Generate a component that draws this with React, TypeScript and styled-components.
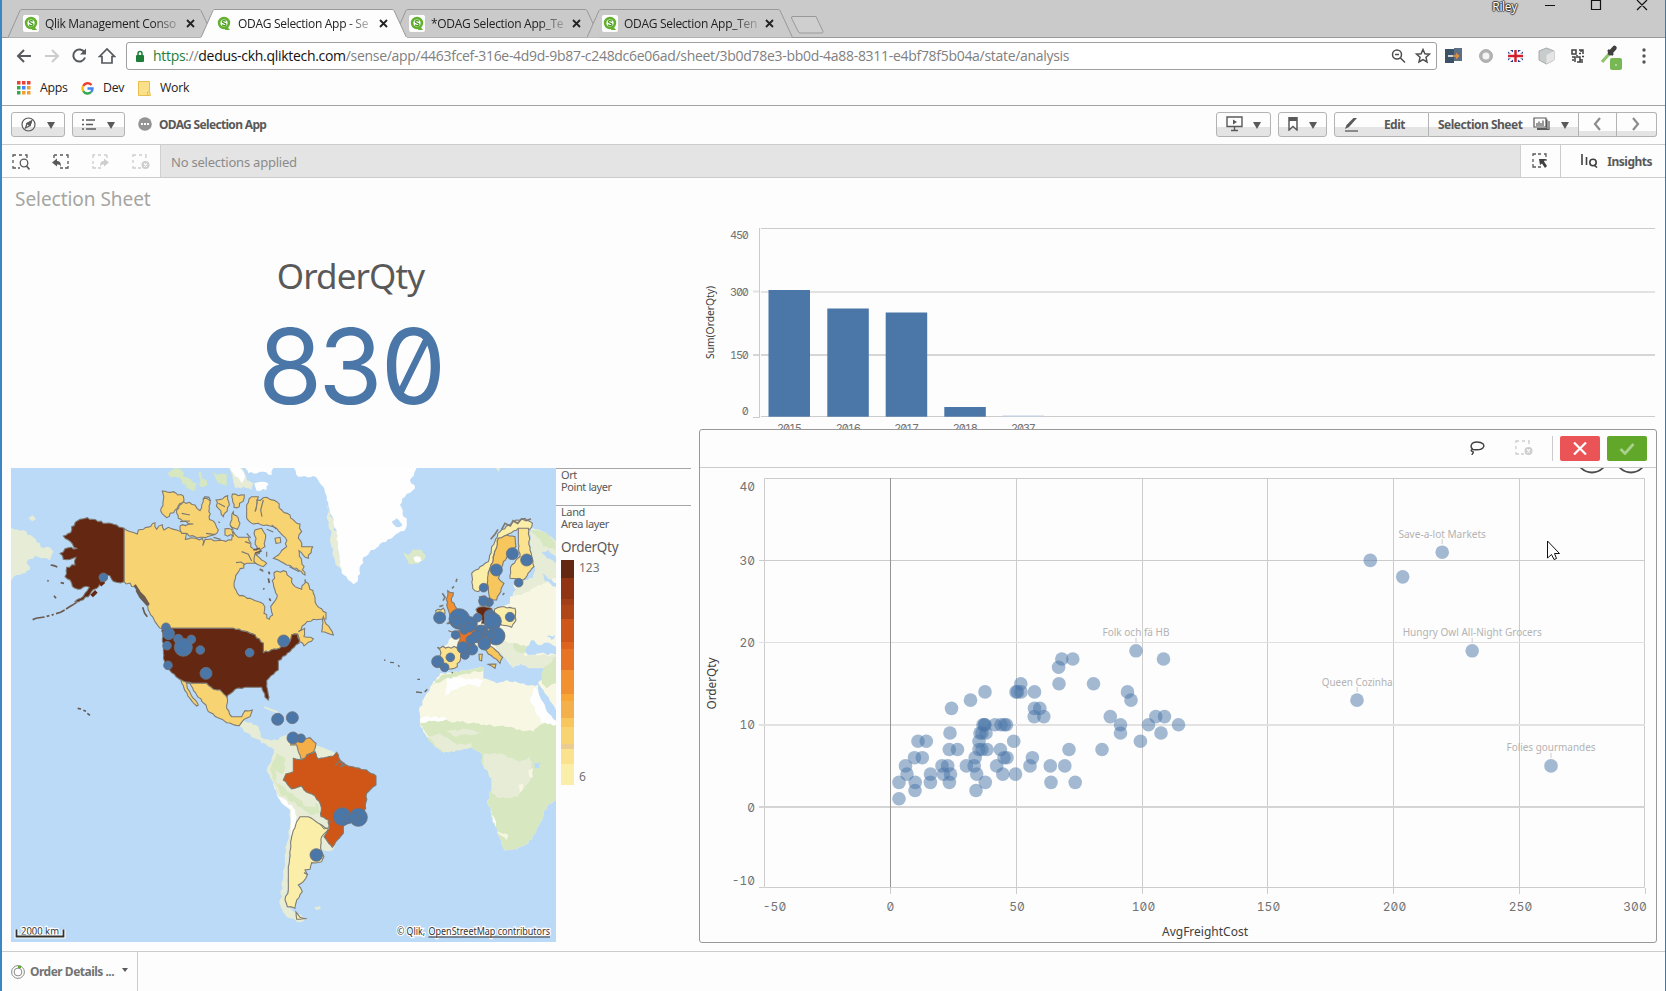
import React from "react";
import styled, { createGlobalStyle } from "styled-components";

const Global = createGlobalStyle`
  * { box-sizing: border-box; }
  html, body { margin: 0; padding: 0; }
  body { width: 1666px; height: 991px; overflow: hidden; background: #fdfdfd; font-family: "Noto Sans", sans-serif; color: #595959; }
  svg { display: block; flex: none; }
  svg text { font-family: "Noto Sans", sans-serif; }
`;

const Window = styled.div`
  width: 1666px;
  height: 991px;
  display: flex;
  flex-direction: column;
  border-left: 2px solid #3b86c4;
  border-right: 1px solid #1e7fd0;
  background: #fdfdfd;
  overflow: hidden;
`;

/* ---------- browser chrome ---------- */

const TabStrip = styled.div`
  height: 38px;
  flex: none;
  display: flex;
  justify-content: space-between;
  background: #cacaca;
  border-bottom: 1px solid #999;
`;
const Tabs = styled.div`
  display: flex;
  padding: 9px 0 0 6px;
  height: 38px;
`;
const TabBox = styled.div<{ $active?: boolean }>`
  width: 206px;
  height: 29px;
  margin-right: -13px;
  display: grid;
  grid-template-columns: 206px;
  z-index: ${(p) => (p.$active ? 2 : 1)};
  > * { grid-area: 1 / 1; }
`;
const TabContent = styled.div`
  display: flex;
  align-items: center;
  padding: 0 19px 0 15px;
  gap: 6px;
`;
const Favicon = styled.span<{ $plate: boolean }>`
  width: 16px;
  height: 17px;
  flex: none;
  display: grid;
  place-items: center;
  border-radius: 2px;
  background: ${(p) => (p.$plate ? "#fdfdfd" : "transparent")};
`;
const TabTitle = styled.span`
  flex: 1;
  min-width: 0;
  font: 12px/18px "Open Sans", sans-serif;
  letter-spacing: -0.3px;
  color: #222;
  white-space: nowrap;
  mask-image: linear-gradient(to right, #000 80%, rgba(0, 0, 0, 0.25) 98%);
`;
const WindowButtons = styled.div`
  display: flex;
  align-items: flex-start;
  padding-right: 13px;
`;
const UserName = styled.span`
  font: 12px/14px "Open Sans", sans-serif;
  letter-spacing: -0.3px;
  color: #fff;
  text-shadow: 1px 0 1px #333, -1px 0 1px #333, 0 1px 1px #333, 0 -1px 1px #333;
  margin-right: 27px;
`;
const AddressRow = styled.div`
  height: 35px;
  flex: none;
  display: flex;
  align-items: center;
  padding: 1px 13px 0 13px;
`;
const NavIcons = styled.div`
  display: flex;
  gap: 11px;
  width: 111px;
`;
const UrlBox = styled.div`
  width: 1311px;
  height: 28px;
  border: 1px solid #a0a0a0;
  border-radius: 3px;
  display: flex;
  align-items: center;
  padding: 0 5px 0 8px;
  background: #fff;
`;
const Url = styled.span`
  flex: 1;
  margin-left: 8px;
  font: 14px/20px "Open Sans", sans-serif;
  letter-spacing: -0.3px;
  white-space: nowrap;
  color: #808080;
  b { font-weight: 400; color: #111; }
  i { font-style: normal; color: #1d7f3a; }
`;
const Extensions = styled.div`
  flex: 1;
  display: flex;
  align-items: center;
  justify-content: space-between;
  padding-left: 8px;
`;
const Bookmarks = styled.div`
  height: 33px;
  flex: none;
  display: flex;
  align-items: center;
  padding: 0 0 2px 15px;
  border-bottom: 1px solid #a4a4a4;
  font: 12.3px/18px "Open Sans", sans-serif;
  letter-spacing: -0.25px;
  color: #222;
`;
const BookmarkLabel = styled.span<{ $w: number }>`
  width: ${(p) => p.$w}px;
  margin-left: 9px;
`;

/* ---------- application header ---------- */

const AppBar = styled.div`
  height: 39px;
  flex: none;
  display: flex;
  align-items: center;
  justify-content: space-between;
  padding: 0 8px 2px 9px;
  border-bottom: 1px solid #ccc;
`;
const Cluster = styled.div<{ $gap?: number }>`
  display: flex;
  align-items: center;
  gap: ${(p) => p.$gap ?? 0}px;
`;
const Button = styled.div<{ $w: number; $split?: number; $l?: boolean; $r?: boolean; $pr?: number }>`
  width: ${(p) => p.$w}px;
  height: 25px;
  display: flex;
  align-items: center;
  justify-content: space-between;
  padding: 0 ${(p) => p.$pr ?? 9}px 0 9px;
  border: 1px solid #b3b3b3;
  border-left-width: ${(p) => (p.$l ? 0 : 1)}px;
  border-radius: ${(p) => (p.$l ? "0" : "3px")} ${(p) => (p.$r ? "0 0" : "3px 3px")} ${(p) => (p.$l ? "0" : "3px")};
  background: linear-gradient(#fdfdfd ${(p) => p.$split ?? 14}px, #e4e4e4 ${(p) => p.$split ?? 14}px);
  font-size: 12px;
  font-weight: 700;
  letter-spacing: -0.5px;
`;
const AppName = styled.span`
  font-size: 12px;
  font-weight: 700;
  letter-spacing: -0.67px;
  margin-left: 7px;
`;
const Caret = styled.span`
  width: 0;
  border: 4.5px solid transparent;
  border-top: 7px solid #595959;
  border-bottom: 0;
  margin-top: 2px;
`;
const SelectionBar = styled.div`
  height: 33px;
  flex: none;
  display: flex;
  border-bottom: 1px solid #ccc;
`;
const SelectionTools = styled.div`
  width: 158px;
  display: flex;
  align-items: center;
  padding: 2px 0 0 10px;
  gap: 22px;
`;
const SelectionText = styled.div`
  flex: 1;
  border: 1px solid #d0d0d0;
  border-width: 0 1px;
  background: #e4e4e4;
  padding-left: 10px;
  font-size: 13px;
  line-height: 34px;
  letter-spacing: -0.22px;
  color: #8b8b8b;
`;
const SmartSearch = styled.div`
  width: 40px;
  display: grid;
  place-items: center;
  padding: 1px 0 0 1px;
  border-right: 1px solid #ccc;
`;
const Insights = styled.div`
  width: 104px;
  display: flex;
  align-items: center;
  justify-content: space-between;
  padding: 0 13px 0 20px;
  font-size: 12px;
  font-weight: 700;
  letter-spacing: -0.5px;
`;

/* ---------- sheet ---------- */

const Sheet = styled.main`
  flex: 1;
  min-height: 0;
  display: flex;
`;
const LeftColumn = styled.section`
  width: 689px;
  padding-left: 9px;
  display: flex;
  flex-direction: column;
`;
const SheetTitle = styled.h1`
  margin: 8px 0 0 4px;
  font-size: 19px;
  line-height: 26px;
  font-weight: 400;
  letter-spacing: -0.04px;
  color: #a5a5a2;
`;
const Kpi = styled.div`
  height: 256px;
  display: flex;
  flex-direction: column;
  align-items: center;
  padding-top: 36px;
`;
const KpiLabel = styled.div`
  font-size: 35px;
  line-height: 56px;
  letter-spacing: -0.9px;
  margin-right: 1px;
`;
const KpiValue = styled.div`
  font: 400 104px/100px Inter, sans-serif;
  font-feature-settings: "zero", "tnum";
  letter-spacing: -5.8px;
  color: #4a76a8;
  margin: 12px 4px 0 0;
`;
const MapRow = styled.div`
  display: flex;
`;
const Legend = styled.div`
  width: 135px;
  display: flex;
  flex-direction: column;
`;
const LayerInfo = styled.div<{ $h: number }>`
  height: ${(p) => p.$h}px;
  border-top: 1px solid #a6a6a6;
  padding: 0 0 0 5px;
  font-size: 11px;
  line-height: 12px;
  letter-spacing: -0.4px;
`;
const LegendTitle = styled.div`
  padding: 6px 0 0 5px;
  font-size: 13.5px;
  line-height: 18px;
  height: 28px;
  letter-spacing: -0.3px;
`;
const Scale = styled.div`
  display: flex;
  gap: 5px;
  padding-left: 5px;
  height: 225px;
`;
const Ramp = styled.div`
  width: 13px;
  display: flex;
  flex-direction: column;
`;
const Step = styled.div<{ $h: number; $c: string }>`
  flex: ${(p) => p.$h};
  background: ${(p) => p.$c};
`;
const ScaleLabels = styled.div`
  display: flex;
  flex-direction: column;
  justify-content: space-between;
  font-size: 12px;
  line-height: 16px;
  color: #737373;
`;
const RightColumn = styled.section`
  flex: 1;
  display: flex;
  flex-direction: column;
  padding-left: 8px;
`;
const BarArea = styled.div`
  height: 251px;
  overflow: hidden;
`;
const ScatterPanel = styled.div`
  width: 958px;
  height: 514px;
  border: 1px solid #999;
  border-radius: 3px;
`;
const PanelBar = styled.div`
  height: 38px;
  display: flex;
  align-items: center;
  justify-content: flex-end;
  padding-right: 9px;
  border-bottom: 1px solid #ccc;
`;
const ToolGap = styled.span`
  width: 30px;
`;
const Divider = styled.span`
  width: 1px;
  height: 25px;
  background: #ccc;
  margin: 0 7px 0 19px;
`;
const Confirm = styled.span<{ $c: string }>`
  width: 40px;
  height: 25px;
  display: grid;
  place-items: center;
  border-radius: 2px;
  background: ${(p) => p.$c};
  & + & { margin-left: 7px; }
`;
const Footer = styled.footer`
  height: 40px;
  flex: none;
  border-top: 1px solid #ccc;
`;
const NavPoint = styled.div`
  width: 136px;
  height: 39px;
  border-right: 1px solid #ccc;
  display: flex;
  align-items: center;
  padding: 0 0 0 9px;
  font-size: 12px;
  font-weight: 700;
  letter-spacing: -0.5px;
  color: #737373;
`;
const FooterLabel = styled.span`
  width: 92px;
  flex: none;
  margin-left: 5px;
  white-space: nowrap;
`;
const SmallCaret = styled(Caret)`
  border-width: 4px 3.5px 0;
  margin-top: -4px;
`;

/* ---------- icons ---------- */

const QlikIcon = () => (
  <svg width="14" height="15" viewBox="0 0 14 15">
    <circle cx="7" cy="7" r="4.9" fill="#fff" stroke="#62b02e" strokeWidth="2.6" />
    <path d="M9 9.5l4 4.6H8z" fill="#62b02e" />
    <path d="M9 5.2C8 4.3 5.3 4.3 5.3 5.8S9 6.8 9 8.4 6 9.800 5 8.800" fill="none" stroke="#4c9a25" strokeWidth="1.3" />
  </svg>
);

const Tab = ({ title, active }: { title: string; active?: boolean }) => (
  <TabBox $active={active}>
    <svg width="206" height="29" viewBox="0 0 206 29">
      <path d="M0 28.500 L12 1.500 Q12.500 .5 14 .5 H191 Q192.500 .5 193 1.500 L205.500 28.500" fill={active ? "#fdfdfd" : "#cacaca"} stroke="#999" />
      {active && <path d="M0 28.500H206" stroke="#fdfdfd" />}
    </svg>
    <TabContent>
      <Favicon $plate={!active}><QlikIcon /></Favicon>
      <TabTitle>{title}</TabTitle>
      <svg width="9" height="9" viewBox="0 0 9 9"><path d="M1 1l7 7M8 1l-7 7" stroke="#222" strokeWidth="1.8" /></svg>
    </TabContent>
  </TabBox>
);

type Kind = "search" | "back" | "forward" | "clear" | "smart";
const DashedIcon = ({ kind, faint }: { kind: Kind; faint?: boolean }) => {
  const c = faint ? "#cdcdcd" : "#595959";
  const frames: Record<Kind, string> = {
    search: "M1 3V1H4M7 1H10M13 1H15V4M1 6V9M1 12V14H4M6 14H8",
    back: "M2 1H5M8 1H11M14 1H16V4M16 7V10M16 12V14H13M11 14H8M2 1V4",
    forward: "M15 1H12M9 1H6M3 1H1V4M1 7V10M1 12V14H4M6 14H9M15 1V4",
    clear: "M1 3V1H4M7 1H10M13 1H14V4M1 6V9M1 12V14H4M6 14H9",
    smart: "M1 3V1H4M6 1H9M12 1H14V4M1 6V9M1 11V14H4M6 14H9M14 6V8",
  };
  return (
    <svg width="18" height="17" viewBox="0 0 18 17" fill="none" stroke={c} strokeWidth="1.3">
      <path d={frames[kind]} />
      {kind === "search" && <><circle cx="12" cy="9" r="3.800" /><path d="M14.500 12l3 3.500" strokeWidth="1.8" /></>}
      {kind === "back" && <path d="M0 8.500L5 4.500V7C8 7 9 9 9 13 8 10.500 7 10.500 5 10.500V12.500Z" fill={c} stroke="none" />}
      {kind === "forward" && <path d="M17 8.500L12 4.500V7C9 7 8 9 8 13 9 10.500 10 10.500 12 10.500V12.500Z" fill={c} stroke="none" />}
      {kind === "clear" && <><circle cx="13.500" cy="11" r="4" fill={c} stroke="none" /><path d="M12 9.500l3 3M15 9.500l-3 3" stroke="#fff" strokeWidth="1.300" /></>}
      {kind === "smart" && <path d="M7 6H14L12 8.500 15 13 13 15 10 10.500 8 12Z" fill="#404040" stroke="none" />}
    </svg>
  );
};

/* ---------- map ---------- */

const parse = (s: string) => s.trim().split(/\s+/).map((p) => p.split(",").map(Number));

// Breaks long coastline segments with a small repeatable displacement; axis-aligned borders stay straight.
const coast = (source: string, amp = 4) => {
  const points = parse(source);
  const out: string[] = [];
  points.forEach((a, i) => {
    const b = points[(i + 1) % points.length];
    out.push(a.join(","));
    const dx = b[0] - a[0];
    const dy = b[1] - a[1];
    const len = Math.hypot(dx, dy);
    if (dx === 0 || dy === 0 || len < 12) return;
    const n = Math.floor(len / 8);
    const side = dx > 0 ? 1 : -1;
    for (let k = 1; k < n; k++) {
      const x = a[0] + (dx * k) / n;
      const y = a[1] + (dy * k) / n;
      const r = Math.sin(Math.round(x) * 12.9898 + Math.round(y) * 78.233) * 43758.5453;
      const j = (r - Math.floor(r) - 0.5) * 2 * amp * side;
      out.push(`${(x - (dy / len) * j).toFixed(1)},${(y + (dx / len) * j).toFixed(1)}`);
    }
  });
  return `M${out.join("L")}Z`;
};

type Shape = [fill: string, points: string, amp?: number];

const northBase: Shape[] = [
  ["#e6ecd6", "33,233 70,240 100,262 130,295 140,290 160,305 150,332 125,325 105,318 80,335 90,360 50,375 33,392"],
  ["#e6ecd6", "85,205 97,196 108,206 97,214"],
  ["#d7e7c0", "503,70 525,54 545,60 550,78 590,100 585,122 560,115 540,85 510,82"],
  ["#d7e7c0", "598,62 605,85 620,90 622,105 600,110"],
  ["#d7e7c0", "635,65 655,75 680,72 680,108 650,92"],
  ["#e6ecd6", "700,95 690,60 725,54 740,90 760,100 755,120 730,110 705,115"],
  ["#fefefe", "688,54 720,54 735,80 725,100 700,70"],
  ["#fefefe", "735,54 820,54 815,75 780,65 745,70"],
  ["#fefefe", "763,100 785,95 806,102 800,120 770,122"],
  ["#e6ecd6", "730,810 775,830 780,862 815,872 850,862 870,850 870,900 830,898 800,885 765,865 735,838 718,828"],
  ["#e6ecd6", "790,768 835,785 830,788 795,774", 1],
];

const northAreas: Shape[] = [
  ["#f8d372", "372,235 398,247 412,252 415,240 430,238 465,218 470,238 487,224 492,240 505,232 530,240 560,248 556,268 607,265 608,287 615,268 650,272 695,270 700,245 715,262 745,262 752,290 770,300 765,240 785,235 797,255 795,290 765,320 765,340 740,340 712,370 702,402 718,437 750,445 790,462 792,490 808,508 818,495 812,470 830,445 825,420 820,400 822,368 850,362 868,380 885,410 905,418 915,388 940,430 950,465 978,488 978,507 940,508 915,522 895,545 914,535 912,560 940,567 912,588 900,575 893,553 875,555 870,575 830,598 790,608 790,580 765,555 700,535 480,535 465,515 445,480 440,455 405,410 372,395"],
  ["#632712", "487,535 700,535 765,555 790,580 790,608 830,598 870,575 875,555 893,553 897,580 870,605 835,632 835,660 800,692 805,750 795,742 785,712 735,712 705,718 680,744 660,720 640,718 620,700 575,700 543,690 515,668 495,640 490,600", 3],
  ["#632712", "372,235 350,225 310,220 262,203 240,208 215,230 212,248 190,258 205,270 230,295 205,293 180,310 190,328 228,322 225,345 200,352 195,380 215,400 225,415 268,412 255,430 225,455 265,440 300,400 320,375 350,397 372,395"],
  ["#f8d372", "543,690 575,700 620,700 640,718 660,720 682,745 680,775 695,800 725,800 735,782 757,780 750,800 732,808 718,827 680,818 625,785 618,765 590,735 570,700 560,700 562,715 595,765 590,768 570,745 555,722", 2],
  ["#f8d372", "487,123 520,125 550,138 552,150 525,180 500,203 482,182 490,150"],
  ["#f8d372", "530,180 550,155 585,165 600,182 610,145 630,152 627,200 655,240 640,255 600,262 545,250 540,228 580,222 535,205"],
  ["#f8d372", "648,150 683,137 688,165 670,200 655,175"],
  ["#f8d372", "697,132 733,135 718,170 702,172"],
  ["#f8d372", "700,185 720,220 712,238 690,225"],
  ["#f8d372", "675,236 695,238 700,258 675,255"],
  ["#f8d372", "740,165 755,140 775,140 765,185 770,150 800,142 830,155 845,180 870,195 885,215 900,222 905,245 895,265 905,290 938,290 925,325 897,302 915,375 890,355 860,345 835,330 820,325 835,315 860,290 855,262 830,235 800,225 775,220 760,222 740,205"],
  ["#f8d372", "765,312 800,340 790,350 770,342 762,335", 2],
  ["#f8d372", "970,500 965,545 1000,555 990,535 978,522", 2],
  ["#f8d372", "825,265 840,262 842,278 828,280", 2],
];

const atlanticBase: Shape[] = [
  ["#e6ecd6", "140,165 150,200 165,205 160,240 180,250 175,300 185,370 165,330 152,280 155,245 145,225"],
  ["#fefefe", "42,54 55,80 100,78 130,110 140,150 158,200 170,250 175,300 185,370 220,403 232,395 250,322 300,282 340,260 378,235 380,215 360,165 375,140 405,115 390,90 410,54"],
  ["#badaf7", "335,215 350,205 368,225 350,232"],
  ["#dbe9c8", "370,305 385,315 400,298 425,300 438,318 415,342 385,340 375,320"],
  ["#fefefe", "400,322 420,320 425,332 405,335"],
  ["#e6ecd6", "648,54 660,54 655,66"],
  ["#f7f6e2", "752,235 800,250 828,275 828,615 790,628 740,622 700,655 680,630 655,600 620,585 590,590 560,580 520,610 480,600 520,560 560,530 590,485 640,478 690,460 690,440 715,420 700,405 760,385 765,350 750,300"],
  ["#e6ecd6", "752,235 790,245 828,275 828,385 790,400 730,430 695,440 710,418 700,405 760,385 765,350 750,300"],
  ["#d7e7c0", "755,240 800,250 826,280 826,300 790,290"],
  ["#f7f6e2", "735,470 750,430 765,460 745,490"],
  ["#e6ecd6", "640,560 680,575 730,590 735,620 700,655 675,625 650,600"],
  ["#d7e7c0", "700,580 740,590 732,610 705,600"],
  ["#badaf7", "735,605 755,570 775,585 810,580 828,590 828,614 780,610 745,615"],
  ["#badaf7", "785,305 805,300 828,320 828,340 800,325"],
  ["#badaf7", "785,370 800,380 828,400 828,410 795,392"],
  ["#badaf7", "800,560 825,555 815,570"],
  ["#e6ecd6", "718,628 750,615 828,614 828,655 790,655 745,655 725,645"],
  ["#d7e7c0", "790,655 828,620 828,700 800,715 785,700"],
];

const southBase: Shape[] = [
  ["#f8f7e3", "720,-50 760,-55 850,-68 850,-35 890,-20 920,-30 1005,-12 1025,-30 1068,-30 1068,330 1030,362 1020,400 985,460 950,478 915,482 885,405 862,340 875,300 875,265 850,228 845,190 815,172 770,180 730,187 690,155 660,100 657,60 680,10"],
  ["#fefefe", "740,-40 850,-30 840,-10 800,-15 760,0 730,20 740,-10"],
  ["#fefefe", "1000,-10 1040,30 1068,80 1068,110 1030,100 1005,60 990,30"],
  ["#fefefe", "660,85 700,80 740,85 740,96 660,98"],
  ["#d7e7c0", "660,98 730,92 780,95 900,108 1000,125 1035,98 1068,105 1068,330 1030,362 1020,400 985,460 950,478 915,482 885,405 862,340 875,300 875,265 850,228 845,190 815,172 770,180 730,187 690,155"],
  ["#e6ecd6", "850,192 900,190 960,215 990,200 1000,260 950,320 900,325 875,310 875,265 850,228"],
  ["#e6ecd6", "680,140 720,130 770,165 815,160 815,172 770,180 730,187"],
  ["#e6ecd6", "740,125 800,118 850,130 810,135 760,138"],
  ["#d7e7c0", "720,-40 760,-55 850,-68 850,-58 760,-40 700,-15"],
  ["#badaf7", "1012,-20 1030,0 1068,60 1068,92 1045,70 1020,20", 2],
  ["#badaf7", "1003,218 1022,215 1018,235 1005,235"],
  ["#f7f6e2", "955,285 970,280 968,300 958,310"],
  ["#f7f6e2", "985,240 1000,235 998,262 988,262"],
  ["#fefefe", "868,360 875,365 888,405 885,410"],
  ["#f7f6e2", "890,425 925,435 920,450"],
  ["#e6ecd6", "240,142 262,135 300,145 345,165 375,175 410,190 430,300 420,440 395,482 362,478 365,420 300,400 275,440 265,520 262,620 265,650 290,670 320,686 292,697 260,680 240,645 250,560 258,480 272,400 270,360 235,320 215,270 200,240 215,205 228,165"],
  ["#d7e7c0", "228,190 255,205 250,250 225,240 230,280 290,320 350,340 360,370 330,375 290,345 240,310 210,240"],
  ["#e6ecd6", "262,290 310,300 345,325 350,350 320,350 285,320"],
  ["#fefefe", "215,270 235,320 275,345 290,380 285,410 272,440 272,360 240,330"],
  ["#e6ecd6", "343,652 360,648 362,656 348,660", 2],
  ["#e6ecd6", "115,108 178,112 182,140 205,155 240,146 232,156 200,166 165,145 140,128"],
  ["#e6ecd6", "190,48 235,65 232,69 195,55", 1],
];

const southAreas: Shape[] = [
  ["#f4af48", "260,145 270,140 290,150 330,143 348,160 340,185 320,195 320,205 303,207 295,185 290,165 262,165", 2],
  ["#cf5617", "280,205 305,210 322,195 345,185 355,207 400,198 410,187 420,210 445,228 500,240 528,258 528,285 500,310 497,355 470,385 432,405 430,430 397,472 372,440 388,415 385,390 363,380 362,345 345,318 312,300 305,288 275,297 250,270 258,252 280,245", 2],
  ["#fbeea9", "300,380 325,380 365,405 385,418 365,440 362,475 372,500 365,515 335,518 330,538 315,540 322,555 310,575 295,585 307,605 290,630 285,655 262,650 255,630 265,600 265,530 275,440 290,395", 2],
  ["#fbeea9", "288,666 300,682 320,686 290,688", 1],
];

const europeAreas: Shape[] = [
  ["#fbeea9", "575,370 600,350 625,335 635,290 660,245 700,215 735,205 757,220 750,238 715,235 680,255 655,265 640,330 628,360 622,410 595,425 578,415", 3],
  ["#f7c65c", "655,265 680,255 705,260 708,290 670,335 655,385 672,400 650,450 632,450 622,400 628,360 640,330", 2],
  ["#fae28e", "715,235 745,235 750,300 762,350 730,390 690,385 692,350 720,320 715,280", 2],
  ["#f29131", "503,422 520,428 515,455 530,475 548,510 505,520 512,500 500,465", 3],
  ["#fae28e", "467,482 490,474 495,490 485,510 465,505"],
  ["#f4af48", "598,440 615,438 610,465 600,465", 2],
  ["#632712", "588,478 605,470 635,475 640,500 620,528 605,520 600,495"],
  ["#e67326", "505,542 545,545 590,530 600,560 575,590 535,590 540,560"],
  ["#fae28e", "472,592 530,593 545,610 532,650 505,657 478,650 483,610"],
  ["#f7c65c", "605,590 635,590 668,622 660,640 650,628 625,612", 2],
  ["#f7c65c", "625,643 648,642 645,655", 1],
  ["#f8d372", "597,613 607,613 605,633 598,630", 1],
  ["#fbeea9", "643,478 665,470 705,475 708,510 695,532 665,525 643,510", 2],
];

const northDots = [[310,382,13],[498,532,13],[506,551,18],[535,567,14],[574,568,13],[550,592,27],[501,587,13],[601,600,13],[504,646,13],[618,670,18],[749,608,13],[851,573,18],[833,808,18],[877,803,18],[903,865,13],[879,864,18]];
const europeDots = [[697,311,18],[740,330,18],[649,360,18],[716,398,13],[611,413,13],[627,457,13],[611,453,15],[479,503,18],[570,522,22],[538,507,31],[530,515,15],[553,540,13],[593,503,13],[630,497,18],[605,545,20],[638,514,26],[690,501,14],[568,532,14],[600,540,14],[527,555,13],[590,560,18],[648,558,27],[632,555,14],[576,598,17],[613,581,19],[573,570,15],[555,615,13],[549,593,18],[511,622,13],[473,635,18],[494,652,13]];
const southDots = [[427,380,27],[475,382,27],[445,387,14],[462,382,14],[349,495,19]];

const Layer = ({ shapes, outline }: { shapes: Shape[]; outline?: boolean }) => (
  <>
    {shapes.map(([fill, points, amp], i) => (
      <path key={i} d={coast(points, amp)} fill={fill} stroke={outline ? "#7d7a73" : "none"} strokeWidth="3.200" />
    ))}
  </>
);
const Dots = ({ data }: { data: number[][] }) => (
  <>{data.map(([x, y, r], i) => <circle key={i} cx={x} cy={y} r={r} fill="#4a76a8" stroke="#6d7076" strokeWidth="2.500" />)}</>
);

const WorldMap = () => (
  <svg width="545" height="474" viewBox="11 468 545 474">
    <rect x="11" y="468" width="545" height="474" fill="#badaf7" />
    <g transform="translate(200 690) scale(.33333)">
      <Layer shapes={southBase} />
      <Layer shapes={southAreas} outline />
      <path d="M405 228l12-14 14 5-8 10 14-4M312 548l12 6" fill="none" stroke="#7d7a73" strokeWidth="4" />
      <path d="M362 405l10 12 14-4 5-20" fill="none" stroke="#7d7a73" strokeWidth="3" />
    </g>
    <g transform="translate(280 450) scale(.33333)"><Layer shapes={atlanticBase} /></g>
    <g transform="translate(0 450) scale(.33333)">
      <Layer shapes={northBase} />
      <Layer shapes={northAreas} outline />
      <g fill="none" stroke="#6b5a50" strokeWidth="5">
        <path d="M98 509l6-3 8-2 22-3M140 499l8-2M155 496l6-3M168 491l14-4 12-7M198 477l18-11 14-9" />
        <path d="M152 345l10 2 10 4M233 775l10 2M250 781l8 3M262 790l8 6M142 392l4 1M162 437l6 8M182 398l10 2" />
        <path d="M275 438l14-14M300 405l12-10" strokeWidth="11" stroke="#632712" />
        <path d="M404 405l14 22 14 14 14 24M410 420l12 22 22 24" strokeWidth="8" />
        <path d="M428 472l6 18 8 10" strokeWidth="5" />
        <path d="M779 358l10 4M806 365l3 8M805 385l3 14M808 445l4 8M790 415l3 3M760 300l20-5M765 310l20-8" />
      </g>
      <g fill="none" stroke="#7d7a73" strokeWidth="3.500">
        <path d="M610 148l5-8 12 2 5 12M655 215l5 3M700 240l-8-12M800 238l20 8M815 225l14 12M725 305l20 8 10 20M708 338l15-2 12 8M618 250l28 4M640 262l22 6M868 350l30 15M800 305v15M790 365l-8-8M545 190l25 5M540 215l30-2M655 160l20 10M790 150l-8 30 4 20M740 250l12 14M735 275l15 5" />
      </g>
      <Dots data={northDots} />
    </g>
    <g transform="translate(280 450) scale(.33333)">
      <Layer shapes={europeAreas} outline />
      <path d="M632 268l12-14 10-16M665 238l10-18 16 8 8-16 14 8 12-14 14 6 14-6M487 430l8 12-6 10M490 466l-12 4M516 415l6-6M528 396l3-10M668 435l5-6M500 520l8 0" fill="none" stroke="#7d7a73" strokeWidth="5" />
      <path d="M330 637l12 1M355 645l3 6M312 630l4 1M412 688l8 0M408 726l18 2M434 726l8-8M515 667l4 2" stroke="#6b6b62" strokeWidth="4" />
      <Dots data={europeDots} />
    </g>
    <g transform="translate(200 690) scale(.33333)"><Dots data={southDots} /></g>
    <g stroke="#fff" strokeWidth="2.500" paintOrder="stroke" fill="#333" fontSize="10.500">
      <text x="21" y="934.500" textLength="38" lengthAdjust="spacingAndGlyphs">2000 km</text>
      <text x="397" y="935" fontSize="10" textLength="28" lengthAdjust="spacingAndGlyphs">© Qlik,</text>
      <text x="428.500" y="935" fontSize="10" textLength="121.500" lengthAdjust="spacingAndGlyphs">OpenStreetMap contributors</text>
    </g>
    <path d="M16.500 929.500V936.500H63.500V929.500" fill="none" stroke="#fff" strokeWidth="4" />
    <path d="M16.500 929.500V936.500H63.500V929.500" fill="none" stroke="#333" strokeWidth="1.800" />
    <path d="M428.500 937H550" stroke="#333" />
  </svg>
);

const ramp: [number, string][] = [[55,"#632712"],[63,"#903414"],[18,"#a23f16"],[42,"#ae4617"],[69,"#cf561a"],[21,"#dd631e"],[60,"#e67326"],[72,"#f29131"],[21,"#f8a637"],[51,"#f4b14b"],[27,"#f7c65c"],[52,"#f8d372"],[14,"#ebcc90"],[47,"#fae28e"],[62,"#fbeea9"]];

/* ---------- charts ---------- */

const Digits = styled.text`
  && {
    font-family: Inter, sans-serif;
    font-feature-settings: "zero", "tnum";
  }
  fill: #737373;
`;

const bars: [string, number, number][] = [["2015", 768.5, 290], ["2016", 827.3, 308.5], ["2017", 885.7, 312.500], ["2018", 944.3, 407], ["2037", 1002.5, 415.500]];

const BarChart = () => (
  <svg width="958" height="251" viewBox="699 178 958 251">
    <path d="M759.500 228V417.500M761 228.500H1655M753 417.500H760" stroke="#ccc" fill="none" />
    <path d="M753 291.500H759M761 292H1655" stroke="#e2e2e2" strokeWidth="2" />
    <path d="M753 355H759M761 355H1655" stroke="#d6d6d6" strokeWidth="1.800" />
    <path d="M761 416.500H1655" stroke="#ccc" />
    {bars.map(([label, x, y], i) => (
      <g key={label}>
        <rect x={x} y={y} width="41.500" height={416.700 - y} fill={i === 4 ? "#c3d2e3" : "#4a76a8"} />
        <Digits x={x + 21} y="431.500" textAnchor="middle" fontSize="11" textLength="25">{label}</Digits>
      </g>
    ))}
    {[["450", 239], ["300", 295.500], ["150", 359], ["0", 415]].map(([label, y]) => (
      <Digits key={label} x="749" y={y} textAnchor="end" fontSize="11" textLength={label === "0" ? 6.500 : 19}>{label}</Digits>
    ))}
    <text transform="translate(713.800 322.500) rotate(-90)" textAnchor="middle" fontSize="11" textLength="73" fill="#404040" lengthAdjust="spacingAndGlyphs">Sum(OrderQty)</text>
  </svg>
);

// Horizontal pixel positions grouped by order quantity.
const scatter: [number, number[]][] = [
  [1, [899]],
  [2, [915, 976]],
  [3, [899, 915.2, 930.4, 949.4, 985.3, 1051, 1075.2]],
  [4, [907, 930.5, 943.5, 950.5, 976.7, 1002.8, 1015.5]],
  [5, [905.5, 942, 947.7, 966.4, 974.2, 996.7, 1030, 1050.3, 1064.8, 1551]],
  [6, [914.5, 922.3, 975.2, 1004, 1007, 1032.4]],
  [7, [949.3, 957.5, 979, 982, 987, 1000.4, 1069, 1102]],
  [8, [918, 926.3, 979, 1013.7, 1140.4]],
  [9, [950, 980, 982, 986, 1120.5, 1161]],
  [10, [983, 984.5, 985, 995, 1001, 1004.5, 1006.5, 1120.5, 1148.5, 1178.5]],
  [11, [1034.2, 1043.8, 1110.3, 1155.8, 1164.5]],
  [12, [951.5, 1034.5, 1039.8]],
  [13, [970.5, 1131, 1357]],
  [14, [985, 1016, 1017.5, 1021, 1034.5, 1127.5]],
  [15, [1020.8, 1059, 1093.5]],
  [17, [1058.6]],
  [18, [1061.8, 1072.8, 1163.5]],
  [19, [1136, 1472.2]],
  [28, [1402.7]],
  [30, [1370.3]],
  [31, [1442.2]],
];
const py = (v: number) => 807 - 8.22 * v;
const callouts: [string, number, number, number][] = [["Folk och fä HB", 1136, 19, 67], ["Save-a-lot Markets", 1442.2, 31, 87.5], ["Hungry Owl All-Night Grocers", 1472.2, 19, 139], ["Queen Cozinha", 1357.200, 13, 71], ["Folies gourmandes", 1551, 5, 89]];

const ScatterChart = () => (
  <svg width="956" height="474" viewBox="700 468 956 474">
    <g fill="none" stroke="#4d4d4d" strokeWidth="1.800">
      <circle cx="1592" cy="457" r="15.500" /><circle cx="1631" cy="457" r="15.500" />
    </g>
    <g stroke="#ccc" fill="none">
      <path d="M764.500 478.500H1644.500V887.500H764.500Z" />
      <path d="M1016.500 478V894M1142.500 478V894M1267.500 478V894M1393.500 478V894M1519.500 478V894M1645.500 888V894M759 887.500H764M890.500 888V894" />
      <path d="M759 560.500H1645" /><path d="M759 642.500H1645" stroke="#e0e0e0" />
      <path d="M759 725H1645" stroke="#e2e2e2" strokeWidth="2" /><path d="M759 807H1645" stroke="#d4d4d4" strokeWidth="2" />
      <path d="M890.500 478V887" stroke="#949494" />
    </g>
    {callouts.map(([name, x, v, w]) => (
      <g key={name}>
        <text x={x} y={py(v) - 14.500} textAnchor="middle" fontSize="10.500" textLength={w} lengthAdjust="spacingAndGlyphs" fill="#b3b3b3">{name}</text>
        <path d={`M${x} ${py(v) - 13}v5`} stroke="#ccc" />
      </g>
    ))}
    {scatter.map(([v, xs]) => xs.map((x, i) => <circle key={v + "-" + i} cx={x} cy={py(v)} r="6.800" fill="#4a76a8" fillOpacity=".5" />))}
    {[["40", 491], ["30", 565], ["20", 647], ["10", 729], ["0", 811.500], ["-10", 885]].map(([l, y]) => (
      <Digits key={l} x="755" y={y} fontSize="12" textAnchor="end">{l}</Digits>
    ))}
    {[["-50", 774.5], ["0", 890.5], ["50", 1017], ["100", 1143.5], ["150", 1268.5], ["200", 1394.5], ["250", 1520.5], ["300", 1635]].map(([l, x]) => (
      <Digits key={l} x={x} y="911" fontSize="12" textAnchor="middle">{l}</Digits>
    ))}
    <text transform="translate(715.500 683.500) rotate(-90)" textAnchor="middle" fontSize="12" fill="#404040" textLength="52" lengthAdjust="spacingAndGlyphs">OrderQty</text>
    <text x="1205" y="936" textAnchor="middle" fontSize="12" fill="#404040" textLength="86" lengthAdjust="spacingAndGlyphs">AvgFreightCost</text>
    <path d="M1547.500 541V558L1551.500 554.500 1554 559.500 1556.500 558.500 1554.500 553.500H1559.500Z" fill="#fff" stroke="#111" />
  </svg>
);

const Chrome = () => (
  <>
    <TabStrip>
      <Tabs>
        <Tab title="Qlik Management Conso" />
        <Tab title="ODAG Selection App - Se" active />
        <Tab title="*ODAG Selection App_Te" />
        <Tab title="ODAG Selection App_Ten" />
        <svg width="48" height="29" viewBox="0 0 48 29"><path d="M12 7.500H36L43 22.500Q43 24 42 24H20Q19 24 18.500 23L11.500 9Q11 7.500 13 7.500Z" fill="#cfcfcf" stroke="#999" /></svg>
      </Tabs>
      <WindowButtons>
        <UserName>Riley</UserName>
        <svg width="108" height="14" viewBox="0 0 108 14" fill="none" stroke="#111" strokeWidth="1.200"><path d="M1 5.500H11M47.500 .5H56.500V9.500H47.500ZM93 0L103 10M103 0L93 10" /></svg>
      </WindowButtons>
    </TabStrip>
    <AddressRow>
      <NavIcons>
        <svg width="18" height="18" viewBox="0 0 18 18" fill="none" stroke="#555a5e" strokeWidth="2"><path d="M16 9H3M9 3L3 9l6 6" /></svg>
        <svg width="16" height="18" viewBox="0 0 16 18" fill="none" stroke="#ccc" strokeWidth="2"><path d="M1 9H13M8 3l6 6-6 6" /></svg>
        <svg width="16" height="18" viewBox="0 0 16 18" fill="none" stroke="#555a5e" strokeWidth="2"><path d="M13.500 5.500A6 6 0 1 0 14 10.500" /><path d="M15 1.500V7.500H9Z" fill="#555a5e" stroke="none" /></svg>
        <svg width="18" height="18" viewBox="0 0 18 18" fill="none" stroke="#555a5e" strokeWidth="1.700"><path d="M1.500 9.500L9 2l7.500 7.500H14V16H4V9.500Z" /></svg>
      </NavIcons>
      <UrlBox>
        <svg width="10" height="13" viewBox="0 0 10 13"><rect x="1" y="5" width="8" height="7" rx="1" fill="#1d7f3a" /><path d="M3 6V3.500a2 2 0 0 1 4 0V6" fill="none" stroke="#1d7f3a" strokeWidth="1.500" /></svg>
        <Url><i>https</i>://<b>dedus-ckh.qliktech.com</b>/sense/app/4463fcef-316e-4d9d-9b87-c248dc6e06ad/sheet/3b0d78e3-bb0d-4a88-8311-e4bf78f5b04a/state/analysis</Url>
        <svg width="40" height="16" viewBox="0 0 40 16" fill="none" stroke="#4d4d4d" strokeWidth="1.500">
          <circle cx="6" cy="6.500" r="4.500" /><path d="M9.500 10l4.500 4.500M4 6.500H8" />
          <path d="M32 1.500l1.900 4.300 4.600.4-3.500 3.100 1 4.700-4-2.400-4 2.400 1-4.700-3.500-3.100 4.600-.4Z" />
        </svg>
      </UrlBox>
      <Extensions>
        <svg width="18" height="18" viewBox="0 0 18 18"><rect x="0" y="2" width="9" height="14" fill="#3d5166" /><rect x="9" y="1" width="8" height="13" fill="#5b7086" /><path d="M3 9h5" stroke="#fff" strokeWidth="1.500" /><path d="M8 9h6M11 6.500l2.500 2.500-2.500 2.500" fill="none" stroke="#f09030" strokeWidth="1.300" /></svg>
        <svg width="16" height="18" viewBox="0 0 16 18"><circle cx="8" cy="9" r="5" fill="#f4f4f4" stroke="#b3b3b3" strokeWidth="3" /><circle cx="8" cy="9" r="6.500" fill="none" stroke="#999" strokeWidth=".7" /></svg>
        <svg width="15" height="12" viewBox="0 0 15 12"><rect width="15" height="12" fill="#24408e" /><path d="M0 0l15 12M15 0L0 12" stroke="#fff" strokeWidth="2.500" /><path d="M7.500 0v12M0 6h15" stroke="#fff" strokeWidth="5" /><path d="M7.500 0v12M0 6h15" stroke="#d0202e" strokeWidth="2.500" /></svg>
        <svg width="17" height="18" viewBox="0 0 17 18"><path d="M8.500 1L16 4v9l-7.500 4L1 13V4Z" fill="#c9cccc" stroke="#a8a8a8" /><path d="M8.500 8L16 4v9l-7.500 4Z" fill="#e5e5e5" /></svg>
        <svg width="15" height="16" viewBox="0 0 15 16" fill="none" stroke="#404040" strokeWidth="1.500"><path d="M2 2h4v4H2ZM9 2h4v4M9 5.500h2M11 2v2M2 9h3v5M2 12h2M7 7v3M8 9h2v3h3M12 8.500h2M7 14h6M10 12v2" /></svg>
        <svg width="24" height="28" viewBox="0 0 24 28"><path d="M3 20l8-9" stroke="#8fc46c" strokeWidth="3.200" /><path d="M9 8l5 5" stroke="#404040" strokeWidth="2.500" /><path d="M11 11l4.500-5" stroke="#404040" strokeWidth="4.500" strokeLinecap="round" /><rect x="11" y="16" width="12" height="12" rx="2" fill="#77b855" /><circle cx="17" cy="23" r=".8" fill="#fff" /></svg>
        <svg width="14" height="18" viewBox="0 0 14 18" fill="#555"><circle cx="6" cy="3" r="1.700" /><circle cx="6" cy="9" r="1.700" /><circle cx="6" cy="15" r="1.700" /></svg>
      </Extensions>
    </AddressRow>
    <Bookmarks>
      <svg width="14" height="14" viewBox="0 0 14 14">
        {[0, 5, 10].map((y, r) => [0, 5, 10].map((x, c) => <rect key={`${x}-${y}`} x={x} y={y} width="3.500" height="3.500" fill={[["#e94335", "#e94335", "#e94335"], ["#34a853", "#4285f4", "#e9a035"], ["#34a853", "#f0a030", "#f0a030"]][r][c]} />))}
      </svg>
      <BookmarkLabel $w={41}>Apps</BookmarkLabel>
      <svg width="13" height="13" viewBox="0 0 13 13" fill="none" strokeWidth="2.400"><path d="M10.500 3A5 5 0 0 0 2.200 4" stroke="#e94335" /><path d="M2.200 4a5 5 0 0 0 0 5" stroke="#fbbc05" /><path d="M2.200 9a5 5 0 0 0 7.800 1.200" stroke="#34a853" /><path d="M10 10.200A5 5 0 0 0 11.500 6.500H6.500" stroke="#4285f4" /></svg>
      <BookmarkLabel $w={35}>Dev</BookmarkLabel>
      <svg width="13" height="15" viewBox="0 0 13 15"><path d="M.5 .5H11.500V10.500L12.500 14.500H.5Z" fill="#fbe08a" stroke="#e8bf4c" /><path d="M9.500 14V11H12" fill="none" stroke="#e8bf4c" /></svg>
      <BookmarkLabel $w={40}>Work</BookmarkLabel>
    </Bookmarks>
  </>
);

const Chevron = ({ flip }: { flip?: boolean }) => (
  <svg width="18" height="14" viewBox="0 0 18 14" fill="none" stroke="#8c8c8c" strokeWidth="2.200"><path d={flip ? "M7 1l5 6-5 6" : "M12 1L7 7l5 6"} /></svg>
);

const AppMark = styled.svg`
  margin-left: 13px;
`;

const Header = () => (
  <>
    <AppBar>
      <Cluster>
        <Cluster $gap={7}>
          <Button $w={54}>
            <svg width="15" height="15" viewBox="0 0 15 15" fill="none" stroke="#595959" strokeWidth="1.200"><circle cx="7.500" cy="7.500" r="6.500" /><path d="M10.500 4L6 6.500 4.500 11 9 8.500Z" /><path d="M10.500 4L6 6.500 9 8.500Z" fill="#595959" /></svg>
            <Caret />
          </Button>
          <Button $w={53}>
            <svg width="15" height="13" viewBox="0 0 15 13" stroke="#595959" strokeWidth="1.400"><path d="M0 2h2M0 6.500h2M0 11h2M4 2H13M4 6.500H11M4 11H14" /></svg>
            <Caret />
          </Button>
        </Cluster>
        <AppMark width="14" height="14" viewBox="0 0 14 14"><circle cx="7" cy="7" r="6.800" fill="#949494" /><path d="M3 7h2M6 7h2M9 7h2" stroke="#fff" strokeWidth="2" /></AppMark>
        <AppName>ODAG Selection App</AppName>
      </Cluster>
      <Cluster $gap={7}>
        <Button $w={55}>
          <svg width="17" height="16" viewBox="0 0 17 16" fill="none" stroke="#595959" strokeWidth="1.400"><path d="M1 1H16V10.500H1ZM8.500 11V14M5 14.500H12" /><path d="M7 3.500l4 2.500-4 2.500Z" fill="#595959" stroke="none" /></svg>
          <Caret />
        </Button>
        <Button $w={49}>
          <svg width="10" height="14" viewBox="0 0 10 14"><path d="M1 .5H9V13L5 9.500 1 13Z" fill="#fff" stroke="#595959" strokeWidth="1.500" /><path d="M1 1H9V4H1Z" fill="#595959" /></svg>
          <Caret />
        </Button>
        <Cluster>
          <Button $w={95} $r $pr={23}>
            <svg width="15" height="15" viewBox="0 0 15 15"><path d="M1 12L2.500 8 9.500 1H13L5 10Z" fill="#595959" /><path d="M1 14H14" stroke="#595959" strokeWidth="1.300" /></svg>
            Edit
          </Button>
          <Button $w={150} $l $r>
            Selection Sheet
            <Cluster $gap={11}>
              <svg width="17" height="14" viewBox="0 0 17 14" fill="none" stroke="#595959" strokeWidth="1.200"><path d="M1 1H13V10H1ZM4 12.500H16V4M14 2.500V11.500H4" /><path d="M4 9V6M6 9V4.500M8 9V6M10 9V3.500" /></svg>
              <Caret />
            </Cluster>
          </Button>
          <Button $w={38} $l $r $split={18}><Chevron /></Button>
          <Button $w={40} $l $split={18}><Chevron flip /></Button>
        </Cluster>
      </Cluster>
    </AppBar>
    <SelectionBar>
      <SelectionTools>
        <DashedIcon kind="search" />
        <DashedIcon kind="back" />
        <DashedIcon kind="forward" faint />
        <DashedIcon kind="clear" faint />
      </SelectionTools>
      <SelectionText>No selections applied</SelectionText>
      <SmartSearch><DashedIcon kind="smart" /></SmartSearch>
      <Insights>
        <svg width="18" height="14" viewBox="0 0 18 14" fill="none" stroke="#404040" strokeWidth="1.600"><path d="M1 0V11M5.500 3V11M13 11l3 2.500" /><circle cx="12" cy="8.500" r="3.200" /></svg>
        Insights
      </Insights>
    </SelectionBar>
  </>
);

export default function App() {
  return (
    <Window>
      <Global />
      <Chrome />
      <Header />
      <Sheet>
        <LeftColumn>
          <SheetTitle>Selection Sheet</SheetTitle>
          <Kpi>
            <KpiLabel>OrderQty</KpiLabel>
            <KpiValue>830</KpiValue>
          </Kpi>
          <MapRow>
            <WorldMap />
            <Legend>
              <LayerInfo $h={37}>Ort<br />Point layer</LayerInfo>
              <LayerInfo $h={27}>Land<br />Area layer</LayerInfo>
              <LegendTitle>OrderQty</LegendTitle>
              <Scale>
                <Ramp>{ramp.map(([h, c]) => <Step key={c} $h={h} $c={c} />)}</Ramp>
                <ScaleLabels><span>123</span><span>6</span></ScaleLabels>
              </Scale>
            </Legend>
          </MapRow>
        </LeftColumn>
        <RightColumn>
          <BarArea><BarChart /></BarArea>
          <ScatterPanel>
            <PanelBar>
              <svg width="16" height="15" viewBox="0 0 16 15" fill="none" stroke="#404040" strokeWidth="1.400"><path d="M4 8.500C.5 6 2 1 8 1s7.500 3 6.500 5S11 9.500 4 8.500C2 8 1.500 10 3.500 10.500S3 13 3 14" /></svg>
              <ToolGap />
              <DashedIcon kind="clear" faint />
              <Divider />
              <Confirm $c="#eb5456"><svg width="14" height="13" viewBox="0 0 14 13"><path d="M1 .5l12 12M13 .5l-12 12" stroke="#fff" strokeWidth="2.200" /></svg></Confirm>
              <Confirm $c="#61a729"><svg width="16" height="12" viewBox="0 0 16 12"><path d="M1.500 6l4.500 4.500L14.500 1" fill="none" stroke="#a9d08b" strokeWidth="2.800" /></svg></Confirm>
            </PanelBar>
            <ScatterChart />
          </ScatterPanel>
        </RightColumn>
      </Sheet>
      <Footer>
        <NavPoint>
          <svg width="14" height="14" viewBox="0 0 14 14" fill="none" stroke="#8a8a8a"><circle cx="7" cy="7" r="6.400" /><circle cx="7" cy="7" r="3.900" /><path d="M7 2H10" stroke="#61a729" strokeWidth="2.200" /></svg>
          <FooterLabel>Order Details ...</FooterLabel>
          <SmallCaret />
        </NavPoint>
      </Footer>
    </Window>
  );
}
